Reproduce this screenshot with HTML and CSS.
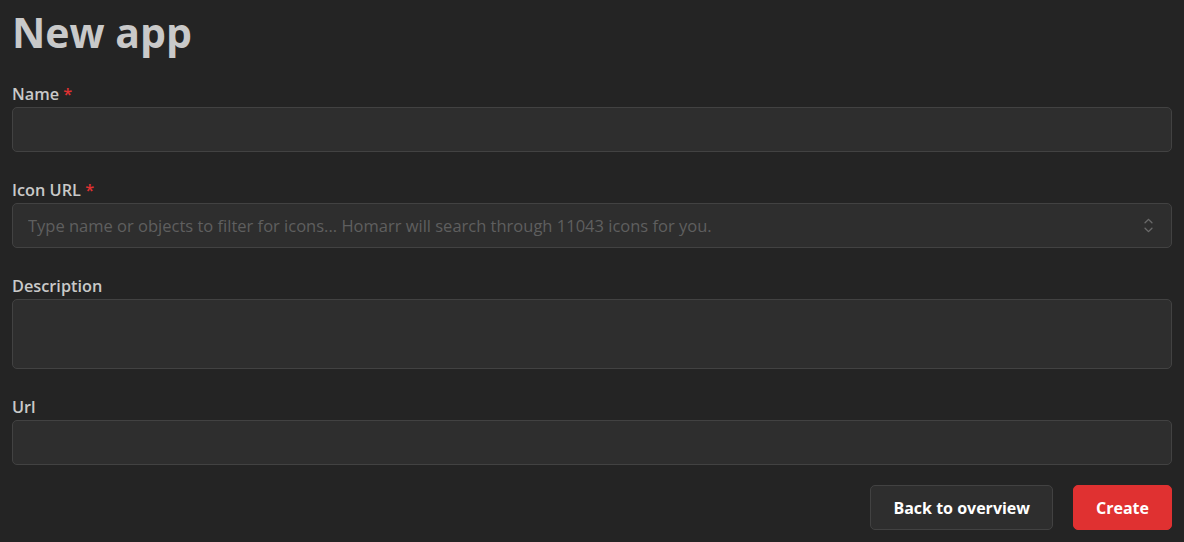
FILE: index.html
```html
<!DOCTYPE html>
<html lang="en">
<head>
<meta charset="utf-8">
<title>New app</title>
<link rel="stylesheet" href="styles.css">
</head>
<body>
<main class="page">
  <h1 class="title">New app</h1>
  <form class="form">
    <div class="field">
      <label class="label">Name <span class="req">*</span></label>
      <input class="input" type="text">
    </div>
    <div class="field">
      <label class="label">Icon URL <span class="req">*</span></label>
      <div class="select">
        <input class="input" type="text" placeholder="Type name or objects to filter for icons... Homarr will search through 11043 icons for you.">
        <svg class="chevron" viewBox="0 0 15 15" width="23" height="23" aria-hidden="true"><path fill="currentColor" fill-rule="evenodd" clip-rule="evenodd" d="M4.93179 5.43179C4.75605 5.60753 4.75605 5.89245 4.93179 6.06819C5.10753 6.24392 5.39245 6.24392 5.56819 6.06819L7.49999 4.13638L9.43179 6.06819C9.60753 6.24392 9.89245 6.24392 10.0682 6.06819C10.2439 5.89245 10.2439 5.60753 10.0682 5.43179L7.81819 3.18179C7.73379 3.0974 7.61933 3.04999 7.49999 3.04999C7.38064 3.04999 7.26618 3.0974 7.18179 3.18179L4.93179 5.43179ZM10.0682 9.56819C10.2439 9.39245 10.2439 9.10753 10.0682 8.93179C9.89245 8.75606 9.60753 8.75606 9.43179 8.93179L7.49999 10.8636L5.56819 8.93179C5.39245 8.75606 5.10753 8.75606 4.93179 8.93179C4.75605 9.10753 4.75605 9.39245 4.93179 9.56819L7.18179 11.8182C7.26618 11.9026 7.38064 11.95 7.49999 11.95C7.61933 11.95 7.73379 11.9026 7.81819 11.8182L10.0682 9.56819Z"/></svg>
      </div>
    </div>
    <div class="field">
      <label class="label">Description</label>
      <textarea class="input textarea"></textarea>
    </div>
    <div class="field">
      <label class="label">Url</label>
      <input class="input" type="text">
    </div>
    <div class="actions">
      <button type="button" class="btn btn-default">Back to overview</button>
      <button type="button" class="btn btn-primary">Create</button>
    </div>
  </form>
</main>
</body>
</html>
```
FILE: styles.css
```css
* { box-sizing: border-box; }
html, body {
  margin: 0;
  background: #242424;
  color: #c9c9c9;
  font-family: "Open Sans", "Noto Sans", sans-serif;
}
.page {
  padding: 0 12px;
}
.title {
  margin: 0;
  padding-top: 4px;
  font-size: 41px;
  line-height: 56px;
  font-weight: 700;
  color: #c9c9c9;
}
.form {
  display: flex;
  flex-direction: column;
  gap: 28px;
  margin-top: 24px;
}
.field {
  display: flex;
  flex-direction: column;
  gap: 3px;
}
.label {
  font-size: 16.3px;
  line-height: 20px;
  font-weight: 600;
  color: #c9c9c9;
}
.req { color: #e03131; }
.input {
  display: block;
  width: 100%;
  height: 45px;
  padding: 0 15px;
  background: #2e2e2e;
  border: 1px solid #424242;
  border-radius: 5px;
  color: #c9c9c9;
  font-family: inherit;
  font-size: 16.5px;
  outline: none;
}
.input::placeholder { color: #5f5f5f; }
.textarea {
  height: 70px;
  resize: none;
  padding-top: 10px;
}
.select { position: relative; }
.select .input { padding-right: 40px; }
.chevron {
  position: absolute;
  right: 12px;
  top: 11px;
  color: #6a6a6a;
}
.actions {
  display: flex;
  justify-content: flex-end;
  gap: 20px;
  margin-top: -8px;
}
.btn {
  height: 45px;
  padding: 0 22px;
  border-radius: 5px;
  font-family: inherit;
  font-size: 16px;
  font-weight: 700;
  color: #ffffff;
  cursor: pointer;
}
.btn-default {
  background: #2e2e2e;
  border: 1px solid #424242;
}
.btn-primary {
  background: #e03131;
  border: 1px solid #e03131;
}
```
